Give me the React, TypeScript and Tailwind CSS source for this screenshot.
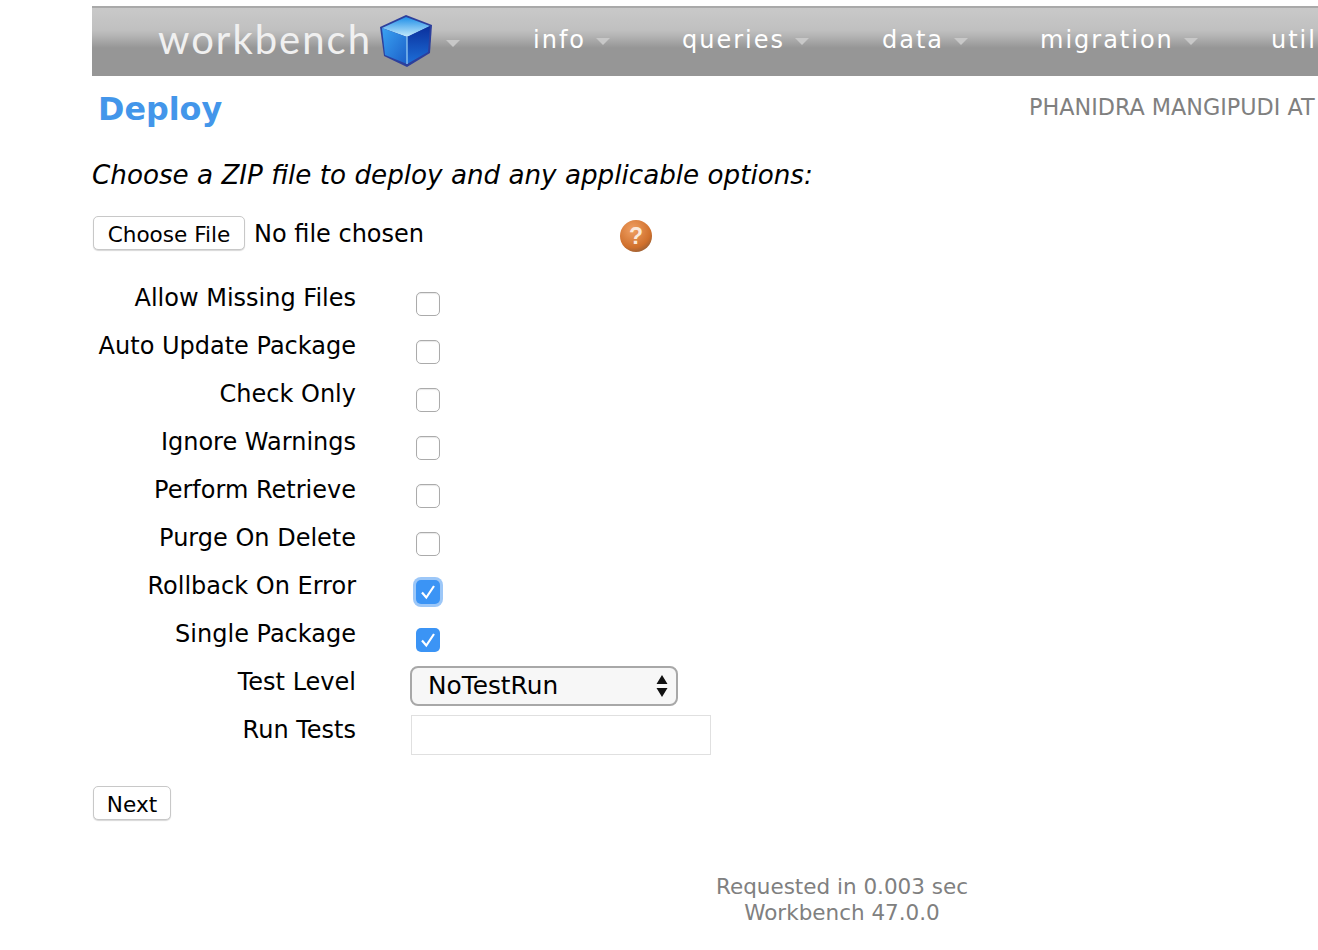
const font = "[font-family:'DejaVu_Sans',Verdana,sans-serif]";

function Caret({ className }: { className: string }) {
  return (
    <svg width="14" height="7" viewBox="0 0 14 7" className={className}>
      <path d="M0 0 H14 L7 7 Z" fill="#c8c8c8" />
    </svg>
  );
}

function Cube() {
  return (
    <svg width="58" height="54" viewBox="0 0 56 54" className="shrink-0">
      <defs>
        <linearGradient id="top" x1="0" y1="0" x2="0" y2="1">
          <stop offset="0" stopColor="#1f8fe8" />
          <stop offset="1" stopColor="#c8ecfc" />
        </linearGradient>
        <linearGradient id="left" x1="0" y1="0" x2="1" y2="1">
          <stop offset="0" stopColor="#3aa2f2" />
          <stop offset="1" stopColor="#1b5fc8" />
        </linearGradient>
        <linearGradient id="right" x1="0" y1="0" x2="0" y2="1">
          <stop offset="0" stopColor="#0a2f9c" />
          <stop offset="1" stopColor="#1d6fd8" />
        </linearGradient>
      </defs>
      <path d="M2 13 L28 1 L54 11 L52 39 L29 53 L6 42 Z" fill="#2c3f9c" />
      <path d="M4 14 L28 3 L52 12 L29 23 Z" fill="url(#top)" />
      <path d="M4 14 L29 23 L29 50 L7 41 Z" fill="url(#left)" />
      <path d="M29 23 L52 12 L50 38 L29 50 Z" fill="url(#right)" />
      <path d="M29 23 L29 50" stroke="#9fd4f7" strokeWidth="1.2" />
    </svg>
  );
}

function Check() {
  return (
    <svg width="18" height="18" viewBox="0 0 18 18">
      <path d="M3 9.5 L7.3 14.5 L15 3" fill="none" stroke="#fff" strokeWidth="2.2" />
    </svg>
  );
}

function Box({ checked, focused }: { checked?: boolean; focused?: boolean }) {
  if (checked) {
    return (
      <span
        className={`mt-[10px] ml-[6px] flex h-[24px] w-[24px] items-center justify-center rounded-[5px] bg-[#3b94f5] ${
          focused ? "shadow-[0_0_0_3px_#9cc7f8]" : ""
        }`}
      >
        <Check />
      </span>
    );
  }
  return (
    <span className="mt-[10px] ml-[6px] block h-[24px] w-[24px] rounded-[5px] border border-[#ababab] bg-white shadow-[inset_0_1px_1px_#e8e8e8]" />
  );
}

const rows: { label: string; checked?: boolean; focused?: boolean }[] = [
  { label: "Allow Missing Files" },
  { label: "Auto Update Package" },
  { label: "Check Only" },
  { label: "Ignore Warnings" },
  { label: "Perform Retrieve" },
  { label: "Purge On Delete" },
  { label: "Rollback On Error", checked: true, focused: true },
  { label: "Single Package", checked: true },
];

function Label({ children }: { children: string }) {
  return <div className="w-[264px] pt-[1px] text-right leading-[30px]">{children}</div>;
}

export default function App() {
  return (
    <div className={`h-[950px] w-full overflow-hidden bg-white ${font} text-[24px] text-black`}>
      <div className="ml-[92px] w-[1500px] pt-[6px]">
        <div className="flex h-[70px] items-start border-t-2 border-[#a9a9a9] bg-[linear-gradient(#c9c9c9_0px,#c0c0c0_22px,#b4b4b4_28px,#a0a0a0_36px,#969696_40px,#969696_70px)] pl-[66px] text-white">
          <div className="mt-[4px] flex h-[54px] w-[214px] items-center whitespace-nowrap font-['Lato'] text-[40px] font-normal tracking-[2px] text-[#f0f0f0]">
            workbench
          </div>
          <div className="ml-[5px] mt-[6px]"><Cube /></div>
          <Caret className="ml-[11px] mt-[32px]" />
          <div className="ml-[73px] mt-[17px] flex items-start tracking-[2px] leading-[30px]">
            <span className="w-[149px] whitespace-nowrap">info<Caret className="ml-[10px] inline" /></span>
            <span className="w-[200px] whitespace-nowrap">queries<Caret className="ml-[10px] inline" /></span>
            <span className="w-[158px] whitespace-nowrap">data<Caret className="ml-[10px] inline" /></span>
            <span className="w-[231px] whitespace-nowrap">migration<Caret className="ml-[10px] inline" /></span>
            <span className="whitespace-nowrap">util</span>
          </div>
        </div>

        <div className="flex items-start pt-[13px]">
          <h1 className="w-[937px] pl-[6px] pt-[2px] text-[31.8px] font-bold leading-[36px] text-[#4396ea]">Deploy</h1>
          <div className="pt-[3px] text-[22.3px] leading-[30px] text-[#808080]">PHANIDRA MANGIPUDI AT</div>
        </div>

        <p className="mt-[31px] whitespace-nowrap text-[26.2px] italic leading-[34px]">Choose a ZIP file to deploy and any applicable options:</p>

        <div className="mt-[24px] flex h-[36px] items-center">
          <button className="ml-[1px] h-[34px] w-[152px] self-start rounded-[5px] border border-[#c8c8c8] bg-white pt-[2px] text-[21.6px] shadow-[0_1px_1px_#d8d8d8]">Choose File</button>
          <span className="ml-[9px] w-[365px]">No file chosen</span>
          <svg width="34" height="34" viewBox="0 0 34 34" className="mt-[4px]">
            <defs>
              <radialGradient id="help" cx="0.4" cy="0.3" r="0.8">
                <stop offset="0" stopColor="#f0a063" />
                <stop offset="0.7" stopColor="#d0702c" />
                <stop offset="1" stopColor="#8a5a38" />
              </radialGradient>
            </defs>
            <circle cx="17" cy="17" r="16" fill="url(#help)" />
            <text x="17" y="25" textAnchor="middle" fontSize="23" fontWeight="700" fill="#fbe9da" fontFamily="'Liberation Sans',sans-serif">?</text>
          </svg>
        </div>

        <div className="mt-[30px]">
          {rows.map((r) => (
            <div key={r.label} className="flex h-[48px] items-start">
              <Label>{r.label}</Label>
              <div className="pl-[54px]"><Box checked={r.checked} focused={r.focused} /></div>
            </div>
          ))}
          <div className="flex h-[48px] items-start">
            <Label>Test Level</Label>
            <div className="pl-[54px]">
              <div className="flex h-[40px] w-[268px] items-center justify-between rounded-[8px] border-2 border-[#a8a8a8] bg-[#f7f7f7] pl-[16px] pr-[8px] text-[24.8px]">
                <span>NoTestRun</span>
                <svg width="12" height="24" viewBox="0 0 12 24">
                  <path d="M6 1 L11.5 10 H0.5 Z M0.5 14 H11.5 L6 23 Z" fill="#111" />
                </svg>
              </div>
            </div>
          </div>
          <div className="flex h-[48px] items-start">
            <Label>Run Tests</Label>
            <div className="pl-[55px] pt-[1px]">
              <div className="h-[40px] w-[300px] border border-[#e0e0e0] bg-white" />
            </div>
          </div>
        </div>

        <button className="ml-[1px] mt-[24px] block h-[34px] w-[78px] rounded-[5px] border border-[#c8c8c8] bg-white pt-[2px] text-[21.6px] shadow-[0_1px_1px_#d8d8d8]">Next</button>

        <div className="mt-[54px] text-center text-[21.5px] leading-[26px] text-[#808080]">
          <div>Requested in 0.003 sec</div>
          <div>Workbench 47.0.0</div>
        </div>
      </div>
    </div>
  );
}
